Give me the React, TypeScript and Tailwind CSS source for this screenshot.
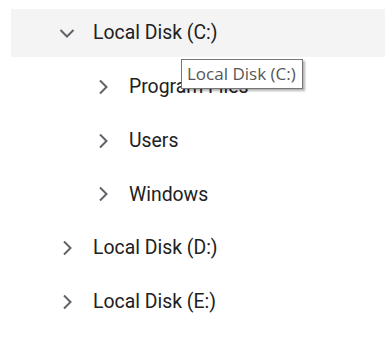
import React from 'react';

interface Node {
  label: string;
  level: number;
  expanded?: boolean;
  selected?: boolean;
}

const NODES: Node[] = [
  { label: 'Local Disk (C:)', level: 0, expanded: true, selected: true },
  { label: 'Program Files', level: 1 },
  { label: 'Users', level: 1 },
  { label: 'Windows', level: 1 },
  { label: 'Local Disk (D:)', level: 0 },
  { label: 'Local Disk (E:)', level: 0 },
];

const Chevron = ({ open }: { open?: boolean }) => (
  <svg width="24" height="24" viewBox="0 0 24 24" fill="none" stroke="#5f6368" strokeWidth="2" strokeLinecap="butt" strokeLinejoin="miter">
    {open ? <path d="M5.5 9l6.5 6.5 6.5-6.5" /> : <path d="M9 5.5l6.5 6.5L9 18.5" />}
  </svg>
);

export default function App() {
  return (
    <div className="relative w-[385px] h-[362px] bg-white pt-[9px] pl-[11px]" style={{ fontFamily: 'Roboto, "Liberation Sans", sans-serif' }}>
      <div className="flex flex-col gap-[5.75px]">
        {NODES.map((n) => (
          <div
            key={n.label}
            className={`h-[48px] flex items-center text-[19.4px] text-[#212121] ${n.selected ? 'bg-[#f4f4f4]' : ''}`}
          >
            <div className={n.level === 0 ? 'w-[44px]' : 'w-[80px]'} />
            <Chevron open={n.expanded} />
            <span className="ml-[14px]">{n.label}</span>
          </div>
        ))}
      </div>

      {/* native-style tooltip */}
      <div
        className="absolute left-[181px] top-[59px] w-[122px] h-[30px] pl-[5px] flex items-center border border-[#767676] bg-white text-[17px] text-[#575757] shadow-[2px_2px_2px_rgba(0,0,0,0.3)] whitespace-nowrap"
        style={{ fontFamily: '"Open Sans", "Noto Sans", sans-serif' }}
      >
        Local Disk (C:)
      </div>
    </div>
  );
}
